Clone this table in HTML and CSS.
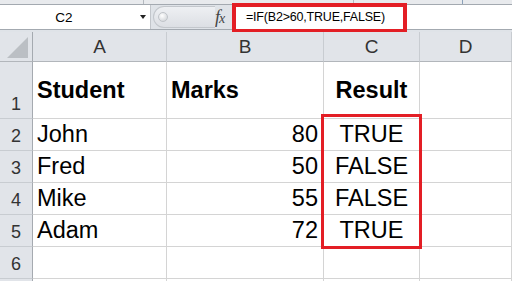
FILE: index.html
```html
<!DOCTYPE html>
<html lang="en">
<head>
  <meta charset="UTF-8">
  <meta name="viewport" content="width=device-width, initial-scale=1.0">
  <title>Marks - Result</title>
  <link rel="stylesheet" href="styles.css">
</head>
<body>
  <div class="window">
    <!-- bottom edge of the ribbon -->
    <div class="ribbon-edge">
      <span class="tick tick-1"></span>
      <span class="tick tick-2"></span>
      <span class="tick tick-3"></span>
    </div>

    <!-- name box + formula bar -->
    <div class="formula-bar">
      <div class="name-box">
        <span class="cell-ref">C2</span>
        <span class="drop-arrow"></span>
      </div>
      <div class="splitter"><span class="knob"></span></div>
      <div class="fx">f<span class="fx-x">x</span></div>
      <div class="formula">=IF(B2&gt;60,TRUE,FALSE)</div>
      <div class="highlight formula-highlight"></div>
    </div>
    <div class="bar-gap"></div>

    <!-- sheet -->
    <div class="sheet">
      <div class="corner">
        <svg width="21" height="21" viewBox="0 0 21 21"><polygon points="21,0 21,21 0,21" fill="#bbbfc4"/></svg>
      </div>
      <div class="col-head">A</div>
      <div class="col-head">B</div>
      <div class="col-head">C</div>
      <div class="col-head">D</div>

      <div class="row-head">1</div>
      <div class="cell txt bold">Student</div>
      <div class="cell txt bold">Marks</div>
      <div class="cell mid bold">Result</div>
      <div class="cell"></div>

      <div class="row-head">2</div>
      <div class="cell txt">John</div>
      <div class="cell num">80</div>
      <div class="cell mid">TRUE</div>
      <div class="cell"></div>

      <div class="row-head">3</div>
      <div class="cell txt">Fred</div>
      <div class="cell num">50</div>
      <div class="cell mid">FALSE</div>
      <div class="cell"></div>

      <div class="row-head">4</div>
      <div class="cell txt">Mike</div>
      <div class="cell num">55</div>
      <div class="cell mid">FALSE</div>
      <div class="cell"></div>

      <div class="row-head">5</div>
      <div class="cell txt">Adam</div>
      <div class="cell num">72</div>
      <div class="cell mid">TRUE</div>
      <div class="cell"></div>

      <div class="row-head">6</div>
      <div class="cell"></div>
      <div class="cell"></div>
      <div class="cell"></div>
      <div class="cell"></div>

      <!-- next row, only its top edge shows -->
      <div class="row-head"></div>
      <div class="cell"></div>
      <div class="cell"></div>
      <div class="cell"></div>
      <div class="cell"></div>

      <div class="highlight result-highlight"></div>
    </div>
  </div>
</body>
</html>
```

FILE: styles.css
```css
* {
  box-sizing: border-box;
}

body {
  margin: 0;
  width: 512px;
  height: 281px;
  overflow: hidden;
  background: #ffffff;
  font-family: "Liberation Sans", Arial, sans-serif;
  color: #000;
}

.window {
  position: relative;
}

/* ribbon edge */
.ribbon-edge {
  position: relative;
  height: 4px;
  background: #e8eaed;
}
.tick {
  position: absolute;
  top: 0;
  width: 1px;
  height: 4px;
  background: #b4b9bf;
}
.tick-1 { left: 143px; }
.tick-2 { left: 353px; }
.tick-3 { left: 462px; background: #8aa0b8; }

/* formula bar */
.formula-bar {
  position: relative;
  display: flex;
  height: 26px;
  background: #dfe3e8;
  border-top: 1px solid #a3a9b0;
  border-bottom: 1px solid #a3a9b0;
}
.name-box {
  display: flex;
  align-items: center;
  width: 151px;
  background: #fff;
  border-right: 1px solid #c2c6cb;
}
.cell-ref {
  width: 128px;
  text-align: center;
  font-size: 13.5px;
  padding-top: 1px;
}
.drop-arrow {
  margin-left: 12px;
  width: 0;
  height: 0;
  border-left: 3.5px solid transparent;
  border-right: 3.5px solid transparent;
  border-top: 4px solid #222;
}
.splitter {
  position: relative;
  margin: 1px 0 0 2px;
  width: 62px;
  height: 22px;
  border: 1px solid #c3c7cc;
  border-right: none;
  border-radius: 11px 0 0 11px;
  background: linear-gradient(#eef0f3, #dcdfe4);
}
.knob {
  position: absolute;
  left: 4px;
  top: 5px;
  width: 10px;
  height: 10px;
  border-radius: 50%;
  background: radial-gradient(circle at 40% 35%, #ffffff, #c9cdd2);
  border: 1px solid #c0c4c9;
}
.fx {
  width: 17px;
  padding-top: 2px;
  font-family: "Liberation Serif", serif;
  font-style: italic;
  font-size: 18px;
  color: #444;
  letter-spacing: -1px;
}
.fx-x {
  font-size: 14px;
}
.formula {
  flex: 1;
  background: #fff;
  padding: 5px 0 0 14px;
  font-size: 12.5px;
  letter-spacing: -0.2px;
  white-space: nowrap;
}

.bar-gap {
  height: 2px;
  background: #dfe3e8;
}

/* red marker boxes */
.highlight {
  position: absolute;
  border: 3px solid #e31e25;
}
.formula-highlight {
  left: 232px;
  top: -2px;
  width: 175px;
  height: 30px;
  border-width: 4px;
}
.result-highlight {
  left: 321px;
  top: 82px;
  width: 101px;
  height: 135px;
  border-width: 3.5px;
}

/* sheet grid */
.sheet {
  position: relative;
  display: grid;
  grid-template-columns: 33px 134px 157px 96px 1fr;
  grid-template-rows: 30px 57px repeat(6, 32px);
}
.corner,
.col-head,
.row-head {
  background: #e1e4e9;
  color: #333;
}
.corner {
  display: flex;
  align-items: flex-end;
  justify-content: flex-end;
  padding: 0 4px 3px 0;
  border-right: 1px solid #a5aab0;
  border-bottom: 1px solid #b2b6bb;
}
.col-head {
  display: flex;
  align-items: center;
  justify-content: center;
  font-size: 19px;
  border-right: 1px solid #c8ccd1;
  border-bottom: 1px solid #b2b6bb;
}
.row-head {
  display: flex;
  align-items: flex-end;
  justify-content: center;
  font-size: 18px;
  padding-bottom: 3px;
  border-right: 1px solid #a5aab0;
  border-bottom: 1px solid #c8ccd1;
}
.cell {
  display: flex;
  align-items: center;
  font-size: 23.5px;
  border-right: 1px solid #d4d4d4;
  border-bottom: 1px solid #d4d4d4;
  white-space: nowrap;
}
.txt {
  padding-left: 4px;
}
.num {
  justify-content: flex-end;
  padding-right: 5px;
}
.mid {
  justify-content: center;
}
.bold {
  font-weight: bold;
}
```
